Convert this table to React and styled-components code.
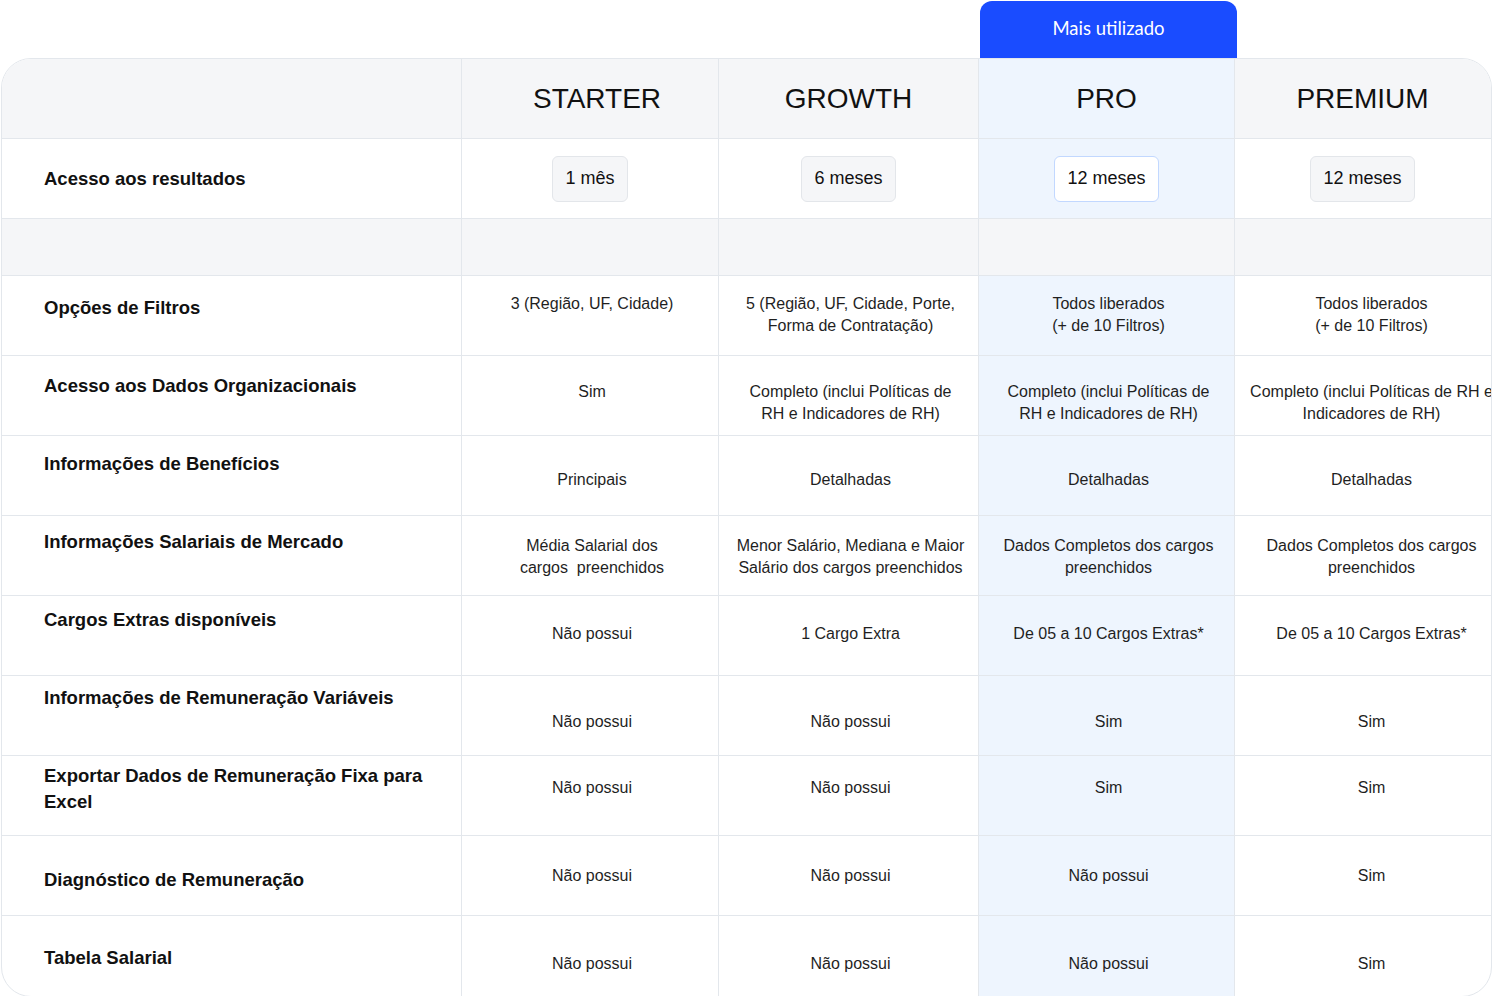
import React from "react";
import styled, { createGlobalStyle } from "styled-components";

const GlobalStyle = createGlobalStyle`
  body {
    margin: 0;
    background: #ffffff;
    font-family: "Liberation Sans", Arial, sans-serif;
    color: #111111;
  }
`;

const COLUMNS = "459px 257px 260px 256px 274px";

const Page = styled.div`
  padding-top: 1px;
  width: 1493px;
`;

const TabRow = styled.div`
  display: grid;
  grid-template-columns: ${COLUMNS};
  height: 57px;
  padding-left: 2px;
`;

const Tab = styled.div`
  grid-column: 4;
  margin-left: 2px;
  margin-right: -3px;
  padding-bottom: 3px;
  background: #1a4cff;
  border-radius: 12px 12px 0 0;
  color: #ffffff;
  font-family: Lato, "Open Sans", sans-serif;
  font-size: 18.5px;
  display: flex;
  align-items: center;
  justify-content: center;
`;

const Table = styled.div`
  margin-left: 1px;
  width: 1491px;
  box-sizing: border-box;
  border: 1px solid #e3e7ec;
  border-radius: 30px;
  overflow: hidden;
`;

const Row = styled.div`
  display: grid;
  grid-template-columns: ${COLUMNS};
  height: ${(p) => p.$height || 80}px;
  box-sizing: border-box;
  border-bottom: ${(p) => (p.$last ? "none" : "1px solid #e3e7ec")};
  background: ${(p) => p.$bg || "transparent"};
`;

const Cell = styled.div`
  box-sizing: border-box;
  border-left: ${(p) => (p.$first ? "none" : "1px solid #e3e7ec")};
  background: ${(p) => (p.$pro ? "#eef5fe" : "transparent")};
`;

const HeadCell = styled(Cell)`
  display: flex;
  align-items: center;
  justify-content: center;
  padding-left: ${(p) => p.$pushRight || 0}px;
  padding-right: ${(p) => p.$shift || 0}px;
  font-size: 28px;
  color: #111111;
`;

const PillCell = styled(Cell)`
  display: flex;
  align-items: center;
  justify-content: center;
  padding-right: ${(p) => p.$shift || 0}px;
`;

const Pill = styled.span`
  height: 46px;
  box-sizing: border-box;
  padding: 0 12px;
  display: inline-flex;
  align-items: center;
  font-size: 18px;
  color: #111111;
  border-radius: 6px;
  background: ${(p) => (p.$pro ? "#ffffff" : "#f5f6f8")};
  border: 1px solid ${(p) => (p.$pro ? "#c2d8ff" : "#e3e6ea")};
`;

const Label = styled(Cell)`
  padding: ${(p) => p.$top}px 24px 0 42px;
  font-size: 18.5px;
  font-weight: 700;
  line-height: 26px;
  color: #111111;
`;

const LabelCenter = styled(Cell)`
  display: flex;
  align-items: center;
  padding-left: 42px;
  font-size: 18.5px;
  font-weight: 700;
  color: #111111;
`;

const Value = styled(Cell)`
  padding: ${(p) => p.$top}px ${(p) => (p.$edge ? 8 : 6)}px 0
    ${(p) => (p.$edge ? 8 : 10)}px;
  font-size: 16px;
  line-height: 22px;
  color: #1f1f1f;
  text-align: center;
  white-space: pre-line;
`;

const rows = [
  {
    label: "Opções de Filtros",
    lt: 19,
    vt: 17,
    values: [
      "3 (Região, UF, Cidade)",
      "5 (Região, UF, Cidade, Porte,\nForma de Contratação)",
      "Todos liberados\n(+ de 10 Filtros)",
      "Todos liberados\n(+ de 10 Filtros)",
    ],
  },
  {
    label: "Acesso aos Dados Organizacionais",
    lt: 17,
    vt: 25,
    values: [
      "Sim",
      "Completo (inclui Políticas de\nRH e Indicadores de RH)",
      "Completo (inclui Políticas de\nRH e Indicadores de RH)",
      "Completo (inclui Políticas de RH e\nIndicadores de RH)",
    ],
  },
  {
    label: "Informações de Benefícios",
    lt: 15,
    vt: 33,
    values: ["Principais", "Detalhadas", "Detalhadas", "Detalhadas"],
  },
  {
    label: "Informações Salariais de Mercado",
    lt: 13,
    vt: 19,
    values: [
      "Média Salarial dos\ncargos\u00a0 preenchidos",
      "Menor Salário, Mediana e Maior\nSalário dos cargos preenchidos",
      "Dados Completos dos cargos\npreenchidos",
      "Dados Completos dos cargos\npreenchidos",
    ],
  },
  {
    label: "Cargos Extras disponíveis",
    lt: 11,
    vt: 27,
    values: [
      "Não possui",
      "1 Cargo Extra",
      "De 05 a 10 Cargos Extras*",
      "De 05 a 10 Cargos Extras*",
    ],
  },
  {
    label: "Informações de Remuneração Variáveis",
    lt: 9,
    vt: 35,
    values: ["Não possui", "Não possui", "Sim", "Sim"],
  },
  {
    label: "Exportar Dados de Remuneração Fixa para Excel",
    lt: 7,
    vt: 21,
    values: ["Não possui", "Não possui", "Sim", "Sim"],
  },
  {
    label: "Diagnóstico de Remuneração",
    lt: 31,
    vt: 29,
    values: ["Não possui", "Não possui", "Não possui", "Sim"],
  },
  {
    label: "Tabela Salarial",
    lt: 29,
    vt: 37,
    values: ["Não possui", "Não possui", "Não possui", "Sim"],
  },
];

const plans = ["STARTER", "GROWTH", "PRO", "PREMIUM"];
const access = ["1 mês", "6 meses", "12 meses", "12 meses"];

export default function App() {
  return (
    <Page>
      <GlobalStyle />
      <TabRow>
        <Tab>Mais utilizado</Tab>
      </TabRow>
      <Table>
        <Row $bg="#f5f6f8">
          <Cell $first />
          {plans.map((p, i) => (
            <HeadCell
              key={p}
              $pro={i === 2}
              $pushRight={i === 0 ? 14 : 0}
              $shift={i === 3 ? 18 : 0}
            >
              {p}
            </HeadCell>
          ))}
        </Row>
        <Row>
          <LabelCenter $first>Acesso aos resultados</LabelCenter>
          {access.map((a, i) => (
            <PillCell key={i} $pro={i === 2} $shift={i === 3 ? 18 : 0}>
              <Pill $pro={i === 2}>{a}</Pill>
            </PillCell>
          ))}
        </Row>
        <Row $height={57} $bg="#f5f6f8">
          <Cell $first />
          <Cell />
          <Cell />
          <Cell />
          <Cell />
        </Row>
        {rows.map((r, idx) => (
          <Row key={r.label} $last={idx === rows.length - 1}>
            <Label $first $top={r.lt}>
              {r.label}
            </Label>
            {r.values.map((v, i) => (
              <Value key={i} $pro={i === 2} $edge={i === 3} $top={r.vt}>
                {v}
              </Value>
            ))}
          </Row>
        ))}
      </Table>
    </Page>
  );
}
